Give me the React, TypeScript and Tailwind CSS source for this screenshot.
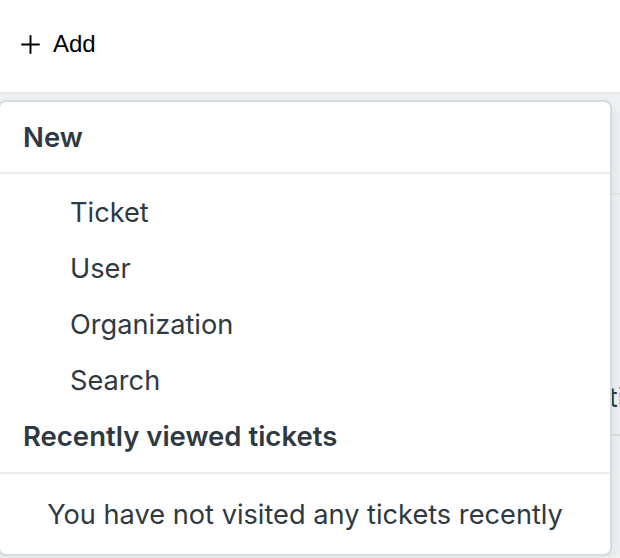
import { Plus } from "lucide-react";

const newItems = ["Ticket", "User", "Organization", "Search"];

function AddMenu() {
  return (
    <div className="absolute left-[-2px] top-[100px] flex h-[456px] w-[614px] flex-col overflow-hidden rounded-[8px] border-2 border-[#d8dcde] bg-white text-[#2f3941] shadow-[0_4px_12px_rgba(4,68,77,0.08)]">
      <div className="flex h-[72px] shrink-0 items-center border-b-2 border-[#e9ebed] pl-[23px] pt-[2px] text-[27.5px] font-semibold">
        New
      </div>
      <ul className="pt-[11px]">
        {newItems.map((item) => (
          <li key={item} className="flex h-14 items-center pl-[70px] text-[27.2px]">
            {item}
          </li>
        ))}
      </ul>
      <div className="flex h-14 shrink-0 items-center pl-[23px] text-[27.5px] font-semibold">
        Recently viewed tickets
      </div>
      <div className="mt-[7px] flex flex-1 items-center justify-center border-t-2 border-[#e9ebed] pt-[2px] text-[27.2px]">
        You have not visited any tickets recently
      </div>
    </div>
  );
}

export default function App() {
  return (
    <div
      className="relative h-[558px] w-[620px] overflow-hidden bg-[#f3f4f4]"
      style={{ fontFamily: "Inter, 'Noto Sans', sans-serif" }}
    >
      <header className="flex h-[94px] items-center border-b-2 border-[#e6e8e9] bg-white pb-[4px] pl-[16px]">
        <button
          type="button"
          className="flex items-center gap-[8px] text-[24px] text-black"
          style={{ fontFamily: "'Liberation Sans', Arial, sans-serif" }}
        >
          <Plus size={29} strokeWidth={1.6} />
          Add
        </button>
      </header>

      {/* page content behind the dropdown */}
      <div className="flex flex-col bg-[#eef0f1] text-[#2f3941]">
        <div className="h-[101px] border-b-2 border-[#e4e7e9]" />
        <div className="flex h-[241px] items-end border-b-2 border-[#d8dcde] pb-[16px] pl-[574px] text-[27.5px]">
          Actions
        </div>
        <div className="flex h-[120px]">
          <div className="w-[160px] border-r-2 border-[#c8ccce]" />
          <div className="w-[16px] border-r-2 border-[#c8ccce]" />
        </div>
      </div>

      <AddMenu />
    </div>
  );
}
